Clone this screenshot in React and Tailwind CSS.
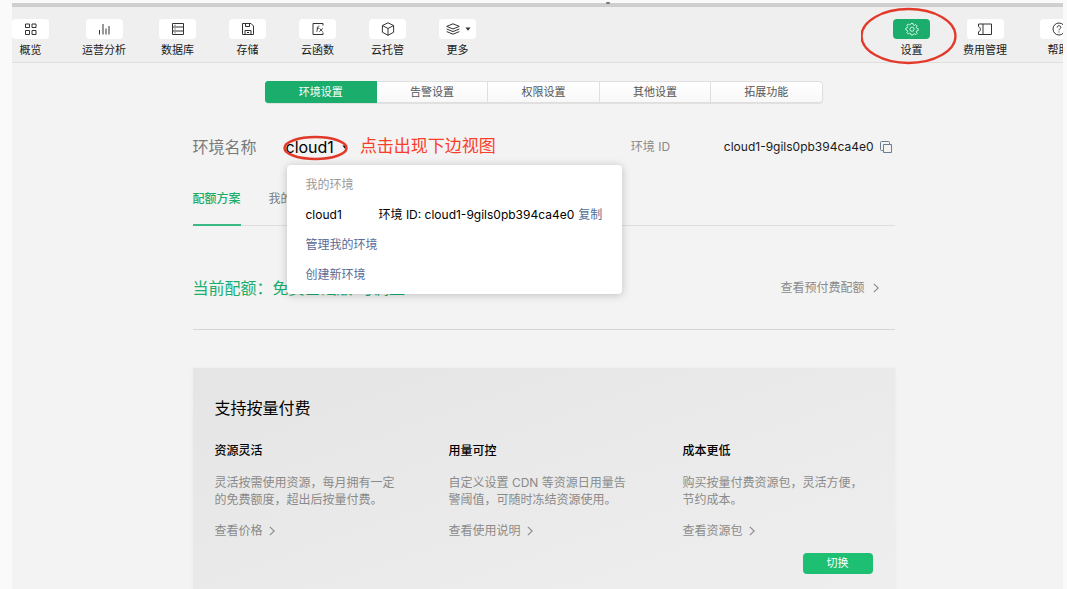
const iconProps = {
  viewBox: "0 0 16 16",
  fill: "none",
  stroke: "currentColor",
  strokeWidth: 1,
  "aria-hidden": true,
};

const OverviewIcon = () => (
  <svg {...iconProps} className="size-4">
    <path d="M2.5 3h4v3.500h-4zM9 3h4v3.500H9zM2.500 9.500h4v4h-4zM9 9.500h4v4H9z" />
  </svg>
);

const ChartIcon = () => (
  <svg {...iconProps} className="size-4">
    <path d="M3.5 9v4.5M7 3v10.5M10 7.5v6M13 5v8.5" />
  </svg>
);

const DatabaseIcon = () => (
  <svg {...iconProps} className="size-4">
    <path d="M2.5 2.5h11v11h-11zM2.5 6h11M2.5 10h11M4.5 4.3h1M4.5 8h1M4.5 11.8h1" />
  </svg>
);

const StorageIcon = () => (
  <svg {...iconProps} className="size-4">
    <path d="M2.5 2.5h8.500l2.500 2.500v8.500h-11zM5.500 2.500v3h4v-3M5 13.500v-4h6v4M7 11.500h2" />
  </svg>
);

const FunctionIcon = () => (
  <svg {...iconProps} className="size-4">
    <path d="M13 4.5v-2H3v11h10v-2" />
    <path
      strokeWidth="0.9"
      d="M9.3 5.2c-1-.3-1.400.2-1.600 1.200l-.9 4.400M6.600 7.200h2.300M9.600 7.400l3 3.300M12.900 7.400l-3.600 3.300"
    />
  </svg>
);

const ContainerIcon = () => (
  <svg {...iconProps} className="size-4">
    <path d="M8 1.8l5.600 2.700v6.800L8 14.300l-5.600-3V4.500zM2.400 4.500L8 7.500l5.600-3M8 7.500v6.800" />
  </svg>
);

const MoreIcon = () => (
  <svg {...iconProps} className="size-4">
    <path d="M8 2.8l6.300 2.600L8 8 1.700 5.400zM1.700 8L8 10.600 14.300 8M1.700 10.600L8 13.200l6.300-2.600" />
  </svg>
);

const SettingsIcon = () => (
  <svg {...iconProps} strokeWidth={0.8} className="size-4">
    <path d="M7 2.500h2l.4 1.500 1 .4 1.400-.8 1.300 1.300-.8 1.400.4 1 1.500.4v1.800l-1.500.4-.4 1 .8 1.400-1.300 1.300-1.400-.8-1 .4L9 14H7l-.4-1.400-1-.4-1.400.8-1.300-1.300.8-1.400-.4-1-1.500-.4V7.100l1.500-.4.4-1-.8-1.400L4.200 3l1.400.8 1-.4z" />
    <circle cx="8" cy="8.200" r="2.100" />
  </svg>
);

const BillingIcon = () => (
  <svg {...iconProps} className="size-4">
    <path d="M1.5 3h13v10.500h-13v-2.700c1.300-.4 1.900-1.300 1.900-2.500S2.800 6.200 1.500 5.700zM6 3v10.500" />
  </svg>
);

const HelpIcon = () => (
  <svg {...iconProps} className="size-4">
    <circle cx="8" cy="8" r="6" />
    <path d="M6.100 6.500C6.200 5.300 7 4.700 8 4.700c1.100 0 1.900.7 1.900 1.700C9.900 7.700 8 7.800 8 9.300M8 10.500v1" />
  </svg>
);

const CopyIcon = () => (
  <svg {...iconProps} className="size-4">
    <path d="M5.500 5.500h8v8h-8zM5 11.500H3.500a1 1 0 0 1-1-1v-7a1 1 0 0 1 1-1h7a1 1 0 0 1 1 1v1.500" />
  </svg>
);

const ArrowIcon = () => (
  <svg viewBox="0 0 6 10" fill="none" className="h-2.5 w-1.5" aria-hidden="true">
    <path d="M0.800 0.800L5.200 5 0.800 9.200" stroke="currentColor" strokeWidth="1.100" />
  </svg>
);

const mainNav = [
  { label: "概览", icon: OverviewIcon },
  { label: "运营分析", icon: ChartIcon },
  { label: "数据库", icon: DatabaseIcon },
  { label: "存储", icon: StorageIcon },
  { label: "云函数", icon: FunctionIcon },
  { label: "云托管", icon: ContainerIcon },
  { label: "更多", icon: MoreIcon, caret: true },
];

const sideNav = [
  { label: "设置", icon: SettingsIcon, active: true },
  { label: "费用管理", icon: BillingIcon },
  { label: "帮助", icon: HelpIcon },
];

const tabs = ["环境设置", "告警设置", "权限设置", "其他设置", "拓展功能"];

const features = [
  {
    title: "资源灵活",
    lines: ["灵活按需使用资源，每月拥有一定", "的免费额度，超出后按量付费。"],
    link: "查看价格",
  },
  {
    title: "用量可控",
    lines: ["自定义设置 CDN 等资源日用量告", "警阈值，可随时冻结资源使用。"],
    link: "查看使用说明",
  },
  {
    title: "成本更低",
    lines: ["购买按量付费资源包，灵活方便，", "节约成本。"],
    link: "查看资源包",
  },
];

function Caret() {
  return (
    <svg viewBox="0 0 6 4" className="h-1 w-1.5" aria-hidden="true">
      <path d="M0.5 0.5h5L3 3.800z" fill="currentColor" />
    </svg>
  );
}

function NavItem({ item }) {
  const Icon = item.icon;

  return (
    <button type="button" className="relative flex shrink-0 flex-col items-center gap-[3px]">
      <span
        className={`flex h-5 w-[37px] items-center justify-center gap-1 rounded-sm ${
          item.active ? "bg-[#1aad6b] text-white" : "bg-white text-[#333]"
        }`}
      >
        <Icon />
        {item.caret && <Caret />}
      </span>
      <span className="text-[11px] leading-4 whitespace-nowrap text-[#1a1a1a]">
        {item.label}
      </span>
      {item.active && (
        <svg
          viewBox="0 0 98 58"
          fill="none"
          aria-hidden="true"
          className="pointer-events-none absolute -top-3 -left-8 h-[58px] w-[98px]"
        >
          <ellipse cx="47.500" cy="29" rx="47" ry="27" stroke="#e23a2a" strokeWidth="2.300" />
        </svg>
      )}
    </button>
  );
}

function EnvMenu() {
  return (
    <div className="absolute top-[30px] left-px z-10 w-[335px] rounded-sm bg-white px-[19px] pt-[5px] pb-1 text-xs leading-[30px] whitespace-nowrap shadow-[0_1px_8px_rgba(0,0,0,0.22)]">
      <p className="text-[#9a9a9a]">我的环境</p>
      <div className="flex">
        <span className="w-[73px] text-black">cloud1</span>
        <span className="text-black">环境 ID: cloud1-9gils0pb394ca4e0</span>
        <button type="button" className="ml-1 text-[#576b95]">
          复制
        </button>
      </div>
      <a href="#manage" className="block text-[#576b95]">
        管理我的环境
      </a>
      <a href="#create" className="block text-[#576b95]">
        创建新环境
      </a>
    </div>
  );
}

function EnvHeader() {
  return (
    <div className="mt-8 flex h-6 items-center">
      <span className="w-[93px] text-base text-[#7a7a7a]">环境名称</span>
      <div className="relative">
        <button type="button" className="relative flex items-center gap-2 text-base text-black">
          cloud1
          <Caret />
          <svg
            viewBox="0 0 66 26"
            fill="none"
            aria-hidden="true"
            className="pointer-events-none absolute top-0 -left-1 h-[26px] w-[66px]"
          >
            <ellipse cx="33.500" cy="13" rx="31" ry="11" stroke="#e23a2a" strokeWidth="2.500" />
          </svg>
        </button>
        <EnvMenu />
      </div>
      <span className="ml-3 text-[17px] text-[#fa3e2c]">点击出现下边视图</span>
      <div className="mr-px ml-auto flex items-center text-xs">
        <span className="w-[93px] text-[#8a8a8a]">环境 ID</span>
        <span className="text-[#1a1a1a]">cloud1-9gils0pb394ca4e0</span>
        <button type="button" aria-label="复制" className="ml-1 text-[#6b7d92]">
          <CopyIcon />
        </button>
      </div>
    </div>
  );
}

function PayAsYouGo() {
  return (
    <section className="mt-[38px] bg-linear-to-br from-[#e5e5e5] to-[#efefef] pt-7 pb-10 shadow-[0_0_3px_rgba(0,0,0,0.05)]">
      <h2 className="px-[22px] text-base leading-6 text-black">支持按量付费</h2>
      <div className="mt-[21px] grid grid-cols-3">
        {features.map((feature) => (
          <div key={feature.title} className="pl-[22px] text-xs whitespace-nowrap text-[#8a8a8a]">
            <h3 className="leading-5 font-medium text-black">{feature.title}</h3>
            <p className="mt-[13px] leading-[17px]">
              {feature.lines[0]}
              <br />
              {feature.lines[1]}
            </p>
            <a href="#detail" className="mt-[13px] flex items-center gap-1.5 leading-5">
              {feature.link}
              <ArrowIcon />
            </a>
          </div>
        ))}
      </div>
      <div className="mt-3 flex justify-end px-[22px]">
        <button
          type="button"
          className="h-[21px] w-[70px] rounded-sm bg-[#1dbf73] text-[11px] text-white"
        >
          切换
        </button>
      </div>
    </section>
  );
}

export default function App() {
  return (
    <div className="relative h-screen overflow-hidden bg-[#fafafa] pt-[3px] pr-1 pl-3 font-[Inter,'Noto_Sans_CJK_SC',sans-serif]">
      <span className="absolute top-0.5 left-[57%] h-0.5 w-1 -translate-x-1/2 rounded-full bg-[#777]" />
      <div className="h-full overflow-hidden border-t-4 border-[#cfcfcf] bg-[#f3f3f3]">
        <div className="-mr-3">
          <header className="-mr-0.5 flex h-14 items-start justify-between border-b border-[#dedede] bg-[#efefef] pt-3">
            <nav className="flex gap-[33px]">
              {mainNav.map((item) => (
                <NavItem key={item.label} item={item} />
              ))}
            </nav>
            <nav className="flex gap-[33px]">
              {sideNav.map((item) => (
                <NavItem key={item.label} item={item} />
              ))}
            </nav>
          </header>

          <main className="mx-auto w-full max-w-[702px]">
            <div
              role="tablist"
              className="mx-auto mt-[18px] flex h-[22px] w-full max-w-[558px] overflow-hidden rounded-sm text-[11px] shadow-[0_1px_1px_rgba(0,0,0,0.08)]"
            >
              {tabs.map((tab, index) => (
                <button
                  key={tab}
                  type="button"
                  role="tab"
                  aria-selected={index === 0}
                  className={
                    index === 0
                      ? "flex-1 border border-[#1aad6b] bg-[#1aad6b] text-white"
                      : "flex-1 border-y border-r border-[#dfdfdf] bg-linear-to-b from-white to-[#f8f8f8] text-[#555] last:rounded-r-sm"
                  }
                >
                  {tab}
                </button>
              ))}
            </div>

            <EnvHeader />

            <div className="mt-[30px] flex gap-7 border-b border-[#dedede] text-xs leading-5">
              <button
                type="button"
                className="-mb-px border-b-2 border-[#3bb883] pb-[15px] font-medium text-[#1aad6b]"
              >
                配额方案
              </button>
              <button type="button" className="pb-4 text-[#7a7a7a]">
                我的资源包
              </button>
            </div>

            <div className="flex h-[104px] items-center justify-between border-b border-[#d6d6d6] pt-5">
              <p className="text-base text-[#1aad6b]">当前配额：免费基础版 可调整</p>
              <a href="#quota" className="mr-4 flex items-center gap-2 text-xs text-[#8a8a8a]">
                查看预付费配额
                <ArrowIcon />
              </a>
            </div>

            <PayAsYouGo />
          </main>
        </div>
      </div>
    </div>
  );
}
